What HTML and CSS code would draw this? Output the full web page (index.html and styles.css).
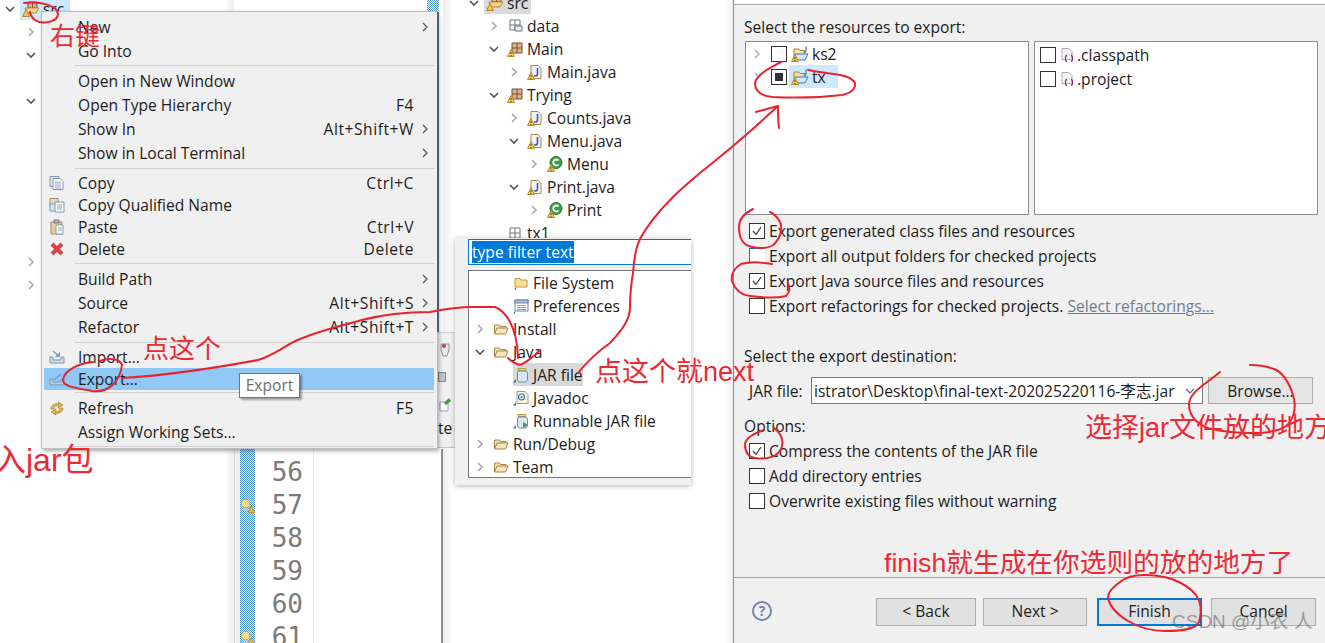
FILE: index.html
```html
<!DOCTYPE html>
<html lang="zh">
<head>
<meta charset="utf-8">
<title>Export JAR</title>
<link rel="stylesheet" href="styles.css">
</head>
<body>
<svg class="sprite" xmlns="http://www.w3.org/2000/svg">
  <symbol id="warn" viewBox="0 0 16 16"><path d="M.5 15.5 4 8.5l3.500 7z" fill="#f6c550" stroke="#b98a2b"/><path d="M4 11v2M4 14v1" stroke="#5a4310"/></symbol>
  <symbol id="chev-r" viewBox="0 0 12 12"><path d="m4 2 4 4-4 4" fill="none" stroke="#a8a8a8" stroke-width="1.6"/></symbol>
  <symbol id="chev-d" viewBox="0 0 12 12"><path d="m2 4 4 4 4-4" fill="none" stroke="#555" stroke-width="1.6"/></symbol>
  <symbol id="chev-m" viewBox="0 0 12 12"><path d="m4 2 4 4-4 4" fill="none" stroke="#555" stroke-width="1.200"/></symbol>
  <symbol id="pkg" viewBox="0 0 16 16"><path d="M5 2h10v10H5z" fill="#d8b48c" stroke="#7b4f2c"/><path d="M10 2v10M5 7h10" stroke="#7b4f2c"/><use href="#warn"/></symbol>
  <symbol id="pkg-e" viewBox="0 0 16 16"><path d="M3 2h10v10H3z" fill="#fff" stroke="#6f7780"/><path d="M8 2v10M3 7h10" stroke="#6f7780"/><path d="M8 8h7v5H8z" fill="#e9edf2" stroke="#6f7780"/></symbol>
  <symbol id="pkg-g" viewBox="0 0 16 16"><path d="M3 3h10v10H3z" fill="#fff" stroke="#6f7780"/><path d="M8 3v10M3 8h10" stroke="#6f7780"/></symbol>
  <symbol id="java" viewBox="0 0 16 16"><path d="M4 1.500h7l3 3v10H4z" fill="#eef3fa" stroke="#a8854f"/><path d="M10.500 4v6c0 2-2.500 2.500-3.500 1.500" fill="none" stroke="#2f5fa8" stroke-width="1.6"/><use href="#warn"/></symbol>
  <symbol id="cls" viewBox="0 0 16 16"><circle cx="9" cy="6.500" r="6" fill="#3f9b4a" stroke="#2b7335"/><path d="M11.500 4.500a3 3 0 1 0 0 4" fill="none" stroke="#fff" stroke-width="1.800"/><use href="#warn"/></symbol>
  <symbol id="src" viewBox="0 0 18 16"><path d="M6 1h9v6H6z" fill="#d8b48c" stroke="#7b4f2c"/><path d="M10.500 1v6" stroke="#7b4f2c"/><path d="M3 7h14l-3 5H5z" fill="#f2d48a" stroke="#b58d43"/><path d="M.5 15.500 4 8.500l3.500 7z" fill="#f6c550" stroke="#b98a2b"/></symbol>
  <symbol id="proj" viewBox="0 0 18 16"><path d="M3 3h5l1 1.500h5V11H3z" fill="#f3e0ad" stroke="#a98542"/><path d="M4 8h13l-3 6H5z" fill="#d6e6f7" stroke="#3f78b8"/><path d="M15 .5v4q0 2-2.500 1.500" fill="none" stroke="#3f78b8" stroke-width="1.200"/><path d="M.5 15.500 4 8.500l3.500 7z" fill="#f6c550" stroke="#b98a2b"/><path d="M4 11v2M4 14v1" stroke="#5a4310"/></symbol>
  <symbol id="fold-o" viewBox="0 0 16 16"><path d="M1.500 13V4h5l1 1.500H13V7" fill="#f5e3b8" stroke="#a98542"/><path d="M1.500 13 4 7h11l-2.500 6z" fill="#f6e6bd" stroke="#a98542"/></symbol>
  <symbol id="fold" viewBox="0 0 16 16"><path d="M2 3.500h5l1 1.500h6v7H2z" fill="#f7dd95" stroke="#c89c42"/><path d="M1 14.500 3 12v2.500z" fill="#2a6ab0"/></symbol>
  <symbol id="pref" viewBox="0 0 16 16"><path d="M2 2h13v11H2z" fill="#fff" stroke="#6a84a8"/><path d="M2 2h13v3H2z" fill="#a9bfd9" stroke="#6a84a8"/><path d="M4 7.500h9M4 9.500h9M4 11.500h9" stroke="#8ca2bd"/><path d="M0 15.500 2 13v2.500z" fill="#2a6ab0"/></symbol>
  <symbol id="jar" viewBox="0 0 16 16"><path d="M5 1.500h8v2H5z" fill="#f0d67e" stroke="#b89a3a"/><path d="M5 4h8l1.500 2v7l-1.500 2H6l-1.500-2V6z" fill="#d7e6f5" stroke="#6b8eb5"/><path d="M0 15.500 3 12v3.500z" fill="#2a6ab0"/></symbol>
  <symbol id="jdoc" viewBox="0 0 16 16"><path d="M4 1.500h8l3 3v9H4z" fill="#fdf7da" stroke="#9a9a80"/><circle cx="8.500" cy="7" r="3" fill="none" stroke="#2a6ab0" stroke-width="1.200"/><circle cx="8.500" cy="7" r="1" fill="#2a6ab0"/><path d="M0 15.500 3 12v3.500z" fill="#2a6ab0"/></symbol>
  <symbol id="rjar" viewBox="0 0 16 16"><use href="#jar"/><path d="M10 9l5 3-5 3z" fill="#3fa14b"/></symbol>
  <symbol id="copy" viewBox="0 0 16 16"><path d="M1 1.500h9v10H1z" fill="#dce7f4" stroke="#7d98b8"/><path d="M4 3.500h7l3 3v8H4z" fill="#fff" stroke="#7d98b8"/><path d="M6 7h6M6 9h6M6 11h6M6 13h6" stroke="#8ca2bd"/></symbol>
  <symbol id="copyq" viewBox="0 0 16 16"><path d="M1 1.500h8v8H1z" fill="#e8dcc0" stroke="#9a8a6a"/><path d="M1 7h7v7H1z" fill="#dce7f4" stroke="#7d98b8"/><path d="M6 5h9v10H6z" fill="#fff" stroke="#7d98b8"/><path d="M8 8h5M8 10h5M8 12h5" stroke="#8ca2bd"/></symbol>
  <symbol id="paste" viewBox="0 0 16 16"><path d="M2 3h11v12H2z" fill="#e6cf9c" stroke="#a08a5c"/><path d="M5 1h5v3H5z" fill="#bcbcbc" stroke="#777"/><path d="M7 6h7v9H7z" fill="#fff" stroke="#7d98b8"/><path d="M9 9h4M9 11h4" stroke="#8ca2bd"/></symbol>
  <symbol id="del" viewBox="0 0 16 16"><path d="m3 3 10 10M13 3 3 13" stroke="#d9434a" stroke-width="4"/></symbol>
  <symbol id="imp" viewBox="0 0 16 16"><path d="M1 8h3v3h8V8h3v6H1z" fill="#cfdcea" stroke="#7d98b8"/><path d="m4 2 6 5" stroke="#7d98b8" stroke-width="1.400"/><path d="M11 3v5H6z" fill="#7d98b8"/></symbol>
  <symbol id="exp" viewBox="0 0 16 16"><path d="M1 8h3v3h8V8h3v6H1z" fill="#b4cbe4" stroke="#7d98b8"/><path d="m5 9 7-6" stroke="#7d98b8" stroke-width="1.400"/></symbol>
  <symbol id="ref" viewBox="0 0 16 16"><path d="M2 9c0-4 4-6 8-5l-1-2 5 3-5 3 1-2c-3-1-5 0-5 3zM14 8c0 4-4 6-8 5l1 2-5-3 5-3-1 2c3 1 5 0 5-3z" fill="#e7b94e" stroke="#a07a22" stroke-width=".7"/></symbol>
  <symbol id="bulb" viewBox="0 0 16 16"><circle cx="6" cy="6" r="4.500" fill="#f7df8a" stroke="#c6a746"/><path d="M4 11h4v3H4z" fill="#c2c7cf"/><path d="M8.500 15.500 12 8.500l3.500 7z" fill="#f0b94a" stroke="#c4902a"/></symbol>
  <symbol id="xml" viewBox="0 0 16 16"><path d="M2 1.500h7l3 3v8H2z" fill="#f4f4f4" stroke="#a8a8b8"/><path d="M7 8.500c-2 0-1 3-2 3 1 0 0 3 2 3M11 8.500c2 0 1 3 2 3-1 0 0 3-2 3" fill="none" stroke="#8a1f7a" stroke-width="1.300"/></symbol>
  <symbol id="tick" viewBox="0 0 14 14"><path d="m3 7 3 3.500L11 3" fill="none" stroke="#444" stroke-width="1.300"/></symbol>
</svg>

<main class="canvas">
  <section class="pane pane-left">
    <div class="tree tree-left">
      <div class="row l-a"><svg class="chev"><use href="#chev-d"/></svg><span class="lbl lbl-blue"><svg class="ic ic-w"><use href="#src"/></svg><span>src</span></span></div>
      <div class="row l-b"><svg class="chev"><use href="#chev-r"/></svg></div>
      <div class="row l-b"><svg class="chev"><use href="#chev-d"/></svg></div>
      <div class="row"></div>
      <div class="row l-b"><svg class="chev"><use href="#chev-d"/></svg></div>
      <div class="row"></div><div class="row"></div><div class="row"></div><div class="row"></div><div class="row"></div><div class="row"></div>
      <div class="row l-b"><svg class="chev"><use href="#chev-r"/></svg></div>
      <div class="row l-b"><svg class="chev"><use href="#chev-r"/></svg></div>
    </div>
  </section>

  <section class="pane pane-editor">
    <div class="ed-edge"></div>
    <div class="ed-marks">
      <div class="mark"></div>
      <div class="mark"><svg class="bulb"><use href="#bulb"/></svg></div>
      <div class="mark"></div>
      <div class="mark"></div>
      <div class="mark"></div>
      <div class="mark"><svg class="bulb"><use href="#bulb"/></svg></div>
    </div>
    <div class="ed-nums"><div>56</div><div>57</div><div>58</div><div>59</div><div>60</div><div>61</div></div>
    <div class="ed-code"></div>
  </section>

  <section class="pane pane-tree">
    <div class="tree tree-main">
      <div class="row l0"><svg class="chev"><use href="#chev-d"/></svg><span class="lbl lbl-grey"><svg class="ic ic-w"><use href="#src"/></svg><span>src</span></span></div>
      <div class="row l1"><svg class="chev"><use href="#chev-r"/></svg><span class="lbl"><svg class="ic"><use href="#pkg-e"/></svg><span>data</span></span></div>
      <div class="row l1"><svg class="chev"><use href="#chev-d"/></svg><span class="lbl"><svg class="ic"><use href="#pkg"/></svg><span>Main</span></span></div>
      <div class="row l2"><svg class="chev"><use href="#chev-r"/></svg><span class="lbl"><svg class="ic"><use href="#java"/></svg><span>Main.java</span></span></div>
      <div class="row l1"><svg class="chev"><use href="#chev-d"/></svg><span class="lbl"><svg class="ic"><use href="#pkg"/></svg><span>Trying</span></span></div>
      <div class="row l2"><svg class="chev"><use href="#chev-r"/></svg><span class="lbl"><svg class="ic"><use href="#java"/></svg><span>Counts.java</span></span></div>
      <div class="row l2"><svg class="chev"><use href="#chev-d"/></svg><span class="lbl"><svg class="ic"><use href="#java"/></svg><span>Menu.java</span></span></div>
      <div class="row l3"><svg class="chev"><use href="#chev-r"/></svg><span class="lbl"><svg class="ic"><use href="#cls"/></svg><span>Menu</span></span></div>
      <div class="row l2"><svg class="chev"><use href="#chev-d"/></svg><span class="lbl"><svg class="ic"><use href="#java"/></svg><span>Print.java</span></span></div>
      <div class="row l3"><svg class="chev"><use href="#chev-r"/></svg><span class="lbl"><svg class="ic"><use href="#cls"/></svg><span>Print</span></span></div>
      <div class="row l1"><span class="chev"></span><span class="lbl"><svg class="ic"><use href="#pkg-g"/></svg><span>tx1</span></span></div>
    </div>
  </section>

  <section class="pane dialog">
    <h2 class="dlg-label dlg-first">Select the resources to export:</h2>
    <div class="lists">
      <div class="listbox">
        <div class="lrow"><svg class="chev"><use href="#chev-r"/></svg><span class="cb"></span><span class="lbl-s"><svg class="ic ic-w"><use href="#proj"/></svg><span>ks2</span></span></div>
        <div class="lrow"><svg class="chev"><use href="#chev-r"/></svg><span class="cb cb-mixed"></span><span class="lbl-s lbl-blue"><svg class="ic ic-w"><use href="#proj"/></svg><span>tx</span></span></div>
      </div>
      <div class="listbox listbox-files">
        <div class="lrow"><span class="cb"></span><span class="lbl-f"><svg class="ic"><use href="#xml"/></svg><span>.classpath</span></span></div>
        <div class="lrow"><span class="cb"></span><span class="lbl-f"><svg class="ic"><use href="#xml"/></svg><span>.project</span></span></div>
      </div>
    </div>
    <div class="checks">
      <div class="check"><span class="cb"><svg class="tick"><use href="#tick"/></svg></span><span>Export generated class files and resources</span></div>
      <div class="check"><span class="cb cb-focus"></span><span>Export all output folders for checked projects</span></div>
      <div class="check"><span class="cb"><svg class="tick"><use href="#tick"/></svg></span><span>Export Java source files and resources</span></div>
      <div class="check"><span class="cb"></span><span>Export refactorings for checked projects. <a class="link">Select refactorings...</a></span></div>
    </div>
    <h2 class="dlg-label dlg-dest">Select the export destination:</h2>
    <div class="jar-row">
      <span class="jar-label">JAR file:</span>
      <div class="combo"><span class="combo-val">istrator\Desktop\final-text-202025220116-李志.jar</span><svg class="combo-arrow" viewBox="0 0 12 12"><path d="m2 4 4 4 4-4" fill="none" stroke="#666" stroke-width="1.200"/></svg></div>
      <button class="btn btn-browse">Browse...</button>
    </div>
    <h2 class="dlg-label dlg-opt">Options:</h2>
    <div class="checks checks-opt">
      <div class="check"><span class="cb"><svg class="tick"><use href="#tick"/></svg></span><span>Compress the contents of the JAR file</span></div>
      <div class="check"><span class="cb"></span><span>Add directory entries</span></div>
      <div class="check"><span class="cb"></span><span>Overwrite existing files without warning</span></div>
    </div>
    <footer class="dlg-foot">
      <span class="help">?</span>
      <div class="btns">
        <button class="btn btn-back">&lt; Back</button>
        <button class="btn btn-next">Next &gt;</button>
        <button class="btn btn-finish">Finish</button>
        <button class="btn btn-cancel">Cancel</button>
      </div>
    </footer>
  </section>

  <div class="frag">
    <svg class="frag-ic" viewBox="0 0 12 16"><path d="M2 2h8v6l-2 6H4L2 8z" fill="#e6e9ef" stroke="#8a93a3"/><circle cx="5" cy="4" r="2" fill="#c8453e"/></svg>
    <span class="frag-sq"></span>
    <svg class="frag-ic" viewBox="0 0 12 16"><path d="M1 6h8v9H1z" fill="#fff" stroke="#99a"/><path d="m5 7 5-5 2 3-5 4z" fill="#3f9b4a"/></svg>
    <span class="frag-t">te</span>
  </div>
  <div class="corner"></div>
  <div class="strip"></div>

  <nav class="menu">
    <div class="mi tall"><span class="mi-ic"></span><span class="mi-t">New</span><svg class="mi-a"><use href="#chev-m"/></svg></div>
    <div class="mi tall"><span class="mi-ic"></span><span class="mi-t">Go Into</span></div>
    <hr class="sep sep-a">
    <div class="mi tall"><span class="mi-ic"></span><span class="mi-t">Open in New Window</span></div>
    <div class="mi tall"><span class="mi-ic"></span><span class="mi-t">Open Type Hierarchy</span><span class="mi-k">F4</span></div>
    <div class="mi tall"><span class="mi-ic"></span><span class="mi-t">Show In</span><span class="mi-k">Alt+Shift+W</span><svg class="mi-a"><use href="#chev-m"/></svg></div>
    <div class="mi tall"><span class="mi-ic"></span><span class="mi-t">Show in Local Terminal</span><svg class="mi-a"><use href="#chev-m"/></svg></div>
    <hr class="sep">
    <div class="mi"><span class="mi-ic"><svg class="ic"><use href="#copy"/></svg></span><span class="mi-t">Copy</span><span class="mi-k">Ctrl+C</span></div>
    <div class="mi"><span class="mi-ic"><svg class="ic"><use href="#copyq"/></svg></span><span class="mi-t">Copy Qualified Name</span></div>
    <div class="mi"><span class="mi-ic"><svg class="ic"><use href="#paste"/></svg></span><span class="mi-t">Paste</span><span class="mi-k">Ctrl+V</span></div>
    <div class="mi"><span class="mi-ic"><svg class="ic"><use href="#del"/></svg></span><span class="mi-t">Delete</span><span class="mi-k">Delete</span></div>
    <hr class="sep">
    <div class="mi tall"><span class="mi-ic"></span><span class="mi-t">Build Path</span><svg class="mi-a"><use href="#chev-m"/></svg></div>
    <div class="mi tall"><span class="mi-ic"></span><span class="mi-t">Source</span><span class="mi-k">Alt+Shift+S</span><svg class="mi-a"><use href="#chev-m"/></svg></div>
    <div class="mi tall"><span class="mi-ic"></span><span class="mi-t">Refactor</span><span class="mi-k">Alt+Shift+T</span><svg class="mi-a"><use href="#chev-m"/></svg></div>
    <hr class="sep">
    <div class="mi"><span class="mi-ic"><svg class="ic"><use href="#imp"/></svg></span><span class="mi-t">Import...</span></div>
    <div class="mi mi-on"><span class="mi-ic"><svg class="ic"><use href="#exp"/></svg></span><span class="mi-t">Export...</span></div>
    <hr class="sep sep-a">
    <div class="mi tall"><span class="mi-ic"><svg class="ic"><use href="#ref"/></svg></span><span class="mi-t">Refresh</span><span class="mi-k">F5</span></div>
    <div class="mi tall"><span class="mi-ic"></span><span class="mi-t">Assign Working Sets...</span></div>
    <hr class="sep sep-b">
  </nav>
  <div class="tooltip">Export</div>

  <aside class="popup">
    <div class="filter"><span class="filter-sel">type filter text</span></div>
    <div class="tree popup-list">
      <div class="row p2"><span class="chev"></span><span class="lbl"><svg class="ic"><use href="#fold"/></svg><span>File System</span></span></div>
      <div class="row p2"><span class="chev"></span><span class="lbl"><svg class="ic"><use href="#pref"/></svg><span>Preferences</span></span></div>
      <div class="row p1"><svg class="chev"><use href="#chev-r"/></svg><span class="lbl"><svg class="ic"><use href="#fold-o"/></svg><span>Install</span></span></div>
      <div class="row p1"><svg class="chev"><use href="#chev-d"/></svg><span class="lbl"><svg class="ic"><use href="#fold-o"/></svg><span>Java</span></span></div>
      <div class="row p2"><span class="chev"></span><span class="lbl lbl-grey"><svg class="ic"><use href="#jar"/></svg><span>JAR file</span></span></div>
      <div class="row p2"><span class="chev"></span><span class="lbl"><svg class="ic"><use href="#jdoc"/></svg><span>Javadoc</span></span></div>
      <div class="row p2"><span class="chev"></span><span class="lbl"><svg class="ic"><use href="#rjar"/></svg><span>Runnable JAR file</span></span></div>
      <div class="row p1"><svg class="chev"><use href="#chev-r"/></svg><span class="lbl"><svg class="ic"><use href="#fold-o"/></svg><span>Run/Debug</span></span></div>
      <div class="row p1"><svg class="chev"><use href="#chev-r"/></svg><span class="lbl"><svg class="ic"><use href="#fold-o"/></svg><span>Team</span></span></div>
    </div>
  </aside>

  <svg class="ink" viewBox="0 0 1325 643" xmlns="http://www.w3.org/2000/svg">
    <path d="M24 3C40 1 57 5 58 14 58 22 42 25 35 20 31 17 30 13 30 12"/>
    <path d="M93 362C80 363 64 370 63 380 63 387 77 388 92 391 108 393 120 382 122 365 120 358 107 358 100 361"/>
    <path d="M123 378C170 375 215 368 258 360 275 355 285 345 300 339 325 329 345 325 362 320 385 314 410 312 430 312 445 309 460 307 473 307L495 307C505 311 517 325 518 358"/>
    <path d="M508 358C512 362 516 364 520 365 528 362 534 356 540 350"/>
    <path d="M578 373C590 358 600 350 610 343 622 330 630 320 630 307 630 295 631 285 633 273 634 258 636 247 640 239 648 224 660 210 673 197 695 175 720 158 740 140 752 130 767 116 777 107"/>
    <path d="M756 112C763 110 771 108 778 106 778 113 778 120 779 128"/>
    <path d="M781 62C770 68 757 74 755 83 755 92 762 96 772 97 795 98 825 97 842 95 852 93 856 88 855 83 852 78 846 76 840 75 829 73 818 72 808 70"/>
    <path d="M753 209C745 213 739 219 739 227 739 238 742 245 752 247 762 249 772 248 776 242 782 235 782 226 780 222 778 218 774 214 770 212"/>
    <path d="M772 264C760 262 748 262 741 264 733 269 731 275 732 281 735 289 740 295 750 296 765 298 778 298 786 296 790 292 790 289 788 283"/>
    <path d="M764 430C755 433 746 438 745 444 745 452 748 457 755 458 768 460 778 456 781 449 784 442 783 435 774 428"/>
    <path d="M1220 372C1206 384 1189 392 1189 405 1189 417 1200 427 1212 429 1225 432 1240 433 1252 433 1270 433 1285 430 1290 422 1296 412 1296 402 1292 392 1288 381 1282 372 1274 369 1266 366 1258 365 1250 365"/>
    <path d="M1144 575C1135 575 1126 577 1120 582 1112 588 1108 592 1108 598 1110 607 1118 615 1128 621 1140 628 1152 631 1165 631 1180 631 1195 630 1199 622 1202 612 1201 602 1196 595 1190 587 1182 583 1172 579 1162 576 1152 575 1144 575"/>
  </svg>

  <div class="note note-rj">右键</div>
  <div class="note note-dz">点这个</div>
  <div class="note note-jar">入jar包</div>
  <div class="note note-nx">点这个就next</div>
  <div class="note note-wh">选择jar文件放的地方</div>
  <div class="note note-fn">finish就生成在你选则的放的地方了</div>
  <div class="mark-csdn">CSDN @小农 人</div>
</main>
</body>
</html>
```
FILE: styles.css
```css
* { box-sizing: border-box; }
html, body { margin: 0; padding: 0; background: #fff; }
.sprite { position: absolute; width: 0; height: 0; overflow: hidden; }

.canvas {
  position: relative;
  width: 1325px;
  height: 643px;
  overflow: hidden;
  display: grid;
  grid-template-columns: 234px 209px 291px 591px;
  font-family: "Open Sans", "Noto Sans CJK SC", sans-serif;
  font-size: 15.6px;
  color: #1c1c1c;
  background: #fff;
}
.pane { height: 643px; overflow: hidden; }

/* trees */
.tree { display: flex; flex-direction: column; }
.row { height: 23px; flex: none; display: flex; align-items: center; }
.chev { width: 12px; height: 12px; flex: none; }
.ic { width: 16px; height: 16px; flex: none; display: block; }
.ic-w { width: 18px; }
.lbl { display: flex; align-items: center; gap: 4px; height: 23px; margin-left: 7px; }
.lbl-blue { background: #cde8ff; }
.lbl-grey { background: #d9d9d9; }

.pane-left { background: linear-gradient(to right, #fff 96%, #eeeeee); }
.tree-left { margin-top: -3px; }
.l-a { padding-left: 4px; }
.l-b { padding-left: 25px; }
.l-a .lbl { margin-left: 4px; padding: 0 6px 0 2px; gap: 3px; }

.pane-tree { background: linear-gradient(to right, #ececec, #fff 10px, #fff 97%, #f1f1f1); border-right: 1px solid #8a8a8a; }
.tree-main { margin-top: -9px; }
.l0 { padding-left: 25px; }
.l1 { padding-left: 45px; }
.l2 { padding-left: 65px; }
.l3 { padding-left: 85px; }
.l0 .lbl { margin-left: 4px; padding: 0 3px 0 2px; gap: 3px; }

/* editor strip */
.pane-editor { display: flex; }
.ed-edge { width: 6px; margin-top: 449px; background: #f0f0f0; border-left: 1px solid #d6d6d6; }
.ed-marks {
  width: 15px;
  margin-top: 449px;
  padding-top: 7px;
  background: repeating-conic-gradient(#4f97dd 0 25%, #d5e6f7 0 50%) 0 0 / 2px 2px;
}
.mark { height: 33px; display: flex; align-items: center; }
.bulb { width: 17px; height: 17px; display: block; }
.ed-nums {
  width: 59px;
  margin-top: 449px;
  padding: 7px 10px 0 0;
  border-right: 1px solid #efefef;
  text-align: right;
  font-family: "DejaVu Sans Mono", monospace;
  font-size: 26px;
  line-height: 33px;
  color: #7a7a7a;
}
.ed-code { flex: 1; margin-top: 449px; border-right: 2px solid #8f8f8f; }

/* dialog */
.dialog {
  position: relative;
  height: 639px;
  margin-top: 4px;
  background: #f0f0f0;
  border-top: 1px solid #a6a6a6;
  display: flex;
  flex-direction: column;
  padding-left: 10px;
  overflow: visible;
}
.dlg-label { margin: 0; font-weight: 400; font-size: 15.6px; line-height: 22px; height: 20px; }
.dlg-first { margin-top: 11px; }
.dlg-dest { margin-top: 27px; }
.dlg-opt { margin-top: 11px; }

.lists { display: flex; gap: 5px; margin: 5px 0 0 1px; height: 174px; }
.listbox { width: 284px; background: #fff; border: 1px solid #8c8c8c; }
.listbox-files { width: 284px; padding-top: 1px; }
.lrow { display: flex; align-items: center; height: 23px; padding-left: 5px; }
.listbox-files .lrow { padding-left: 5px; height: 24px; }
.lrow .chev { opacity: .9; }
.lrow .cb { margin-left: 8px; }
.listbox-files .lrow .cb { margin-left: 0; }
.lbl-s { display: flex; align-items: center; gap: 3px; height: 23px; margin-left: 2px; padding: 0 12px 0 2px; }
.lbl-f { display: flex; align-items: center; gap: 1px; margin-left: 4px; }

.cb { width: 16px; height: 16px; background: #fff; border: 1px solid #333; flex: none; display: flex; align-items: center; justify-content: center; }
.cb-focus { border-color: #0078d7 #fff #fff #0078d7; }
.cb-mixed::after { content: ""; width: 8px; height: 8px; background: #333; }
.tick { width: 14px; height: 14px; }

.checks { display: flex; flex-direction: column; margin-top: 3px; padding-left: 5px; }
.checks-opt { margin-top: 3px; }
.check { display: flex; align-items: center; gap: 4px; height: 25px; }
.link { color: #6d7f8f; text-decoration: underline; }

.jar-row { display: flex; align-items: center; margin-top: 12px; height: 27px; padding-left: 5px; }
.jar-label { width: 62px; flex: none; }
.combo { width: 392px; height: 27px; background: #fff; border: 1px solid #7a7a7a; display: flex; align-items: center; padding-left: 2px; overflow: hidden; }
.combo-val { flex: 1; white-space: nowrap; overflow: hidden; }
.combo-arrow { width: 12px; height: 12px; margin: 0 6px; flex: none; }

.btn { font: inherit; color: #1c1c1c; background: #e1e1e1; border: 1px solid #adadad; height: 28px; padding: 0 0 2px; }
.btn-browse { width: 105px; margin-left: 5px; height: 27px; background: #e4e4e4; padding: 0; }

.dlg-foot { position: absolute; left: 0; right: 0; top: 572px; height: 66px; border-top: 1px solid #a8a8a8; display: flex; padding: 20px 9px 0 18px; }
.help { width: 20px; height: 20px; border: 2px solid #6d87a8; border-radius: 50%; color: #6d87a8; font-weight: 700; font-size: 14px; line-height: 16px; text-align: center; margin-top: 3px; }
.btns { display: flex; margin-left: auto; }
.btn-back { width: 100px; margin-right: 7px; }
.btn-next { width: 104px; margin-right: 10px; }
.btn-finish { width: 105px; margin-right: 9px; border: 2px solid #0078d7; }
.btn-cancel { width: 105px; }

/* toolbar fragment beside the menu */
.frag {
  position: absolute; left: 438px; top: 332px; width: 20px; height: 116px;
  background: #f0f0f0; border-top: 1px solid #d0d0d0; border-bottom: 1px solid #c4c4c4;
  display: flex; flex-direction: column; gap: 14px; padding-top: 9px; overflow: hidden;
}
.frag-ic { width: 12px; height: 16px; flex: none; display: block; margin-left: 1px; }
.frag-sq { width: 8px; height: 10px; flex: none; background: #c4c4c4; border: 1px solid #888; }
.frag-t { line-height: 18px; font-size: 15.6px; margin-top: -7px; }
.corner { position: absolute; left: 427px; top: 0; width: 12px; height: 12px; background: repeating-conic-gradient(#4f97dd 0 25%, #fff 0 50%) 0 0 / 2px 2px; }
.strip { position: absolute; left: 437px; top: 12px; width: 2px; height: 320px; background: #5f7f9f; }

/* context menu */
.menu {
  position: absolute; left: 41px; top: 11px; width: 396px; height: 438px;
  background: #f0f0f0; border: 1px solid #bdbdbd; border-right: 0; padding-top: 3px;
  box-shadow: 2px 2px 4px rgba(0, 0, 0, .35);
  display: flex; flex-direction: column;
}
.mi { display: flex; align-items: center; height: 22px; flex: none; margin: 0 3px 0 2px; }
.mi.tall { height: 24px; }
.mi-ic { width: 34px; flex: none; display: flex; padding-left: 5px; }
.mi-t { flex: 1; }
.mi-k { margin-right: 20px; letter-spacing: .55px; }
.mi-a { width: 12px; height: 12px; flex: none; margin-left: -15px; margin-right: 3px; }
.mi-on { background: #90c8f6; }
.sep { border: 0; height: 1px; background: #d0d0d0; margin: 3px 3px 3px 33px; flex: none; }
.sep-a { margin-top: 2px; }
.sep-b { margin-top: 2px; }

.tooltip {
  position: absolute; left: 239px; top: 373px; width: 61px; height: 25px;
  background: #fff; border: 1px solid #767676; color: #6f6f6f; text-align: center; line-height: 23px;
  box-shadow: 2px 2px 2px rgba(0, 0, 0, .35);
}

/* wizard popup */
.popup {
  position: absolute; left: 455px; top: 238px; width: 236px; height: 247px;
  background: #f0f0f0; padding: 1px 0 0 13px;
  box-shadow: 0 1px 5px rgba(0, 0, 0, .3);
  display: flex; flex-direction: column;
}
.filter { height: 26px; background: #fff; border: 1px solid #0078d7; border-right: 0; padding-left: 3px; display: flex; align-items: center; flex: none; }
.filter-sel { background: #0078d7; color: #fff; line-height: 22px; }
.popup-list { margin-top: 5px; height: 208px; background: #fff; border: 1px solid #777; border-right: 0; flex: none; overflow: hidden; }
.p1 { padding-left: 5px; }
.p2 { padding-left: 25px; }

/* red marker annotations */
.ink { position: absolute; inset: 0; width: 1325px; height: 643px; pointer-events: none; }
.ink path { fill: none; stroke: #e8222e; stroke-width: 2; stroke-linecap: round; stroke-linejoin: round; }
.note { position: absolute; color: #ea2a35; font-family: "Liberation Sans", "Noto Sans CJK SC", sans-serif; font-size: 26px; line-height: 30px; white-space: nowrap; }
.note-rj { left: 50px; top: 21px; font-size: 25px; }
.note-dz { left: 143px; top: 334px; }
.note-jar { left: -6px; top: 445px; font-size: 32px; }
.note-nx { left: 595px; top: 357px; font-size: 27px; }
.note-wh { left: 1085px; top: 413px; font-size: 27px; }
.note-fn { left: 884px; top: 548px; font-size: 26.700px; }
.mark-csdn { position: absolute; left: 1172px; top: 610px; font-size: 19px; line-height: 24px; color: rgba(90, 90, 90, .55); font-family: "Liberation Sans", "Noto Sans CJK SC", sans-serif; white-space: nowrap; }
```
